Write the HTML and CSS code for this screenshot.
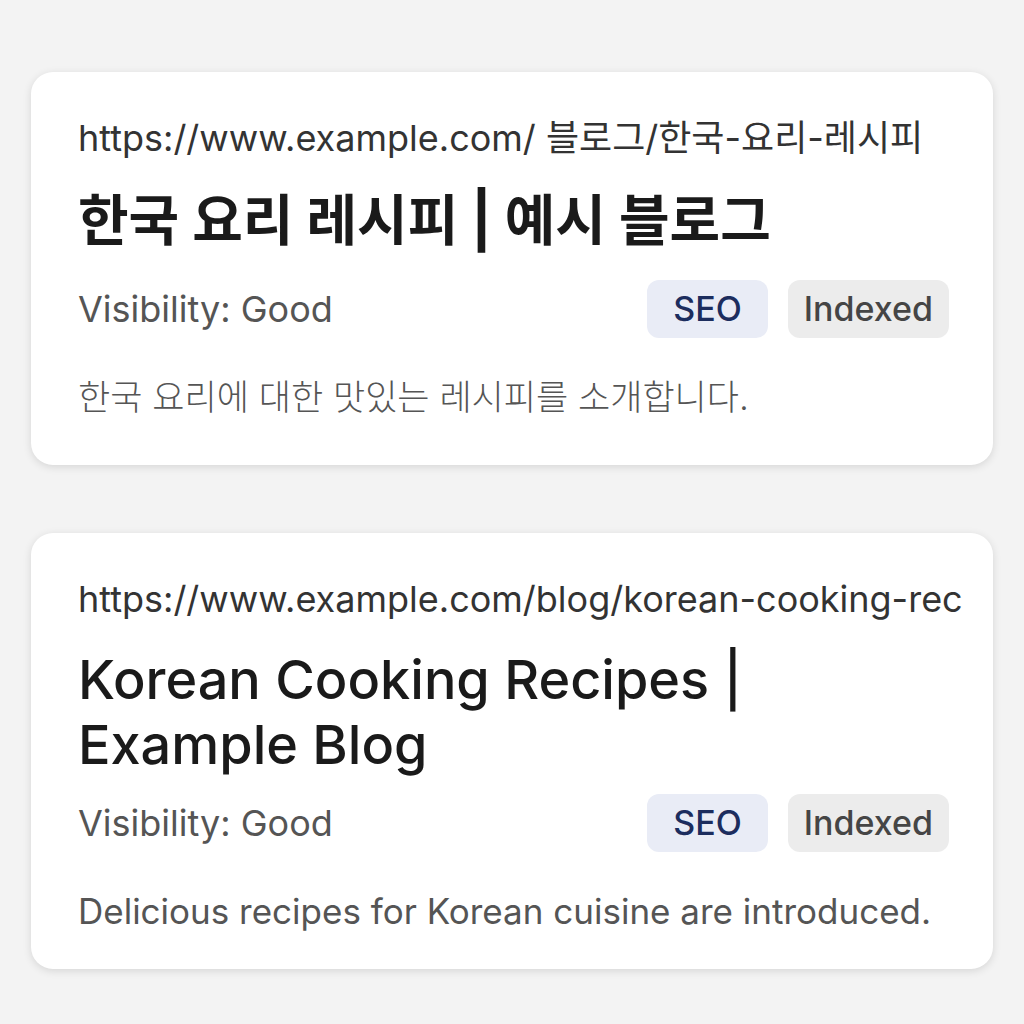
FILE: index.html
```html
<!DOCTYPE html>
<html lang="ko">
<head>
    <meta charset="UTF-8">
    <meta name="viewport" content="width=device-width, initial-scale=1.0">
    <title>Search Preview</title>
    <link rel="stylesheet" href="styles.css">
</head>
<body>
    <div class="container">
        <!-- Korean result -->
        <div class="result-card">
            <div class="result-url">https://www.example.com/ 블로그/한국-요리-레시피</div>
            <h2 class="result-title">한국 요리 레시피 | 예시 블로그</h2>
            <div class="result-meta">
                <span class="visibility">Visibility: Good</span>
                <div class="tags">
                    <span class="tag tag-seo">SEO</span>
                    <span class="tag tag-indexed">Indexed</span>
                </div>
            </div>
            <p class="result-desc">한국 요리에 대한 맛있는 레시피를 소개합니다.</p>
        </div>

        <!-- English result -->
        <div class="result-card result-card-en">
            <div class="result-url">https://www.example.com/blog/korean-cooking-rec</div>
            <h2 class="result-title">Korean Cooking Recipes | Example Blog</h2>
            <div class="result-meta">
                <span class="visibility">Visibility: Good</span>
                <div class="tags">
                    <span class="tag tag-seo">SEO</span>
                    <span class="tag tag-indexed">Indexed</span>
                </div>
            </div>
            <p class="result-desc">Delicious recipes for Korean cuisine are introduced.</p>
        </div>
    </div>
</body>
</html>
```

FILE: styles.css
```css
/* General Styling */
body {
    font-family: Inter, 'Noto Sans CJK KR', sans-serif;
    margin: 0;
    padding: 0;
    background-color: #f3f3f3;
}

.container {
    display: flex;
    flex-direction: column;
    gap: 68px;
    padding: 72px 31px 52px;
}

/* Result Card */
.result-card {
    background-color: #fff;
    border-radius: 22px;
    padding: 44px 40px 48px 47px;
    box-shadow: 0 2px 8px rgba(0, 0, 0, 0.12);
}

.result-url {
    font-size: 36px;
    line-height: 44px;
    color: #333;
    white-space: nowrap;
}

.result-title {
    margin: 28px 0 28px;
    font-size: 55px;
    line-height: 64px;
    font-weight: 700;
    color: #1a1a1a;
}

.result-meta {
    display: flex;
    justify-content: space-between;
    align-items: center;
    margin-right: 4px;
}

.visibility {
    font-size: 36px;
    color: #555;
}

.tags {
    display: flex;
    gap: 20px;
}

.tag {
    font-size: 34px;
    line-height: 58px;
    font-weight: 500;
    border-radius: 12px;
}

.tag-seo {
    padding: 0 26px;
    background-color: #e9ecf6;
    color: #1c2d5e;
}

.tag-indexed {
    padding: 0 16px;
    background-color: #ececec;
    color: #454545;
}

.result-desc {
    margin: 39px 0 0;
    font-size: 35px;
    line-height: 40px;
    font-weight: 300;
    color: #555;
}

/* English card */
.result-card-en {
    padding-bottom: 38px;
}

.result-card-en .result-title {
    margin: 26px 0 17px;
    font-size: 54px;
    line-height: 65px;
    font-weight: 500;
}

.result-card-en .result-desc {
    font-weight: 400;
}
```
